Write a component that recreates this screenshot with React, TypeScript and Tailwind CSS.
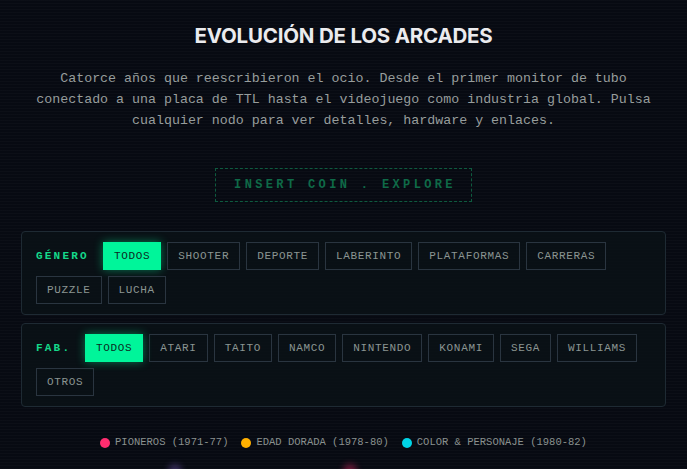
import React from "react";

const genres = ["TODOS", "SHOOTER", "DEPORTE", "LABERINTO", "PLATAFORMAS", "CARRERAS", "PUZZLE", "LUCHA"];
const fabs = ["TODOS", "ATARI", "TAITO", "NAMCO", "NINTENDO", "KONAMI", "SEGA", "WILLIAMS", "OTROS"];

const mono = "font-['Liberation_Mono','DejaVu_Sans_Mono',monospace]";

function Chip({ label, active }: { label: string; active?: boolean }) {
  return active ? (
    <button className={`h-[28px] px-[10px] bg-[#00f59a] text-[#0b2a1f] text-[11px] tracking-[0.06em] ${mono} shadow-[0_0_10px_rgba(0,245,154,0.45)] border border-[#00f59a]`}>
      {label}
    </button>
  ) : (
    <button className={`h-[28px] px-[10px] border border-[#2a3540] text-[#8b9592] text-[11px] tracking-[0.06em] ${mono} bg-transparent`}>
      {label}
    </button>
  );
}

function Panel({ label, items, labelW }: { label: string; items: string[]; labelW: string }) {
  return (
    <div className="mx-[21px] rounded-[4px] border border-[#1e2a33] bg-[#0a1116]/80 pt-[10px] pb-[10px] pl-[14px] pr-[14px]">
      <div className="flex flex-wrap gap-[6px] items-center">
        <span className={`${labelW} text-[#14d98a] text-[11px] font-bold tracking-[0.2em] ${mono}`}>{label}</span>
        {items.map((it, i) => (
          <Chip key={it + i} label={it} active={i === 0} />
        ))}
      </div>
    </div>
  );
}

export default function App() {
  return (
    <div className="relative w-[687px] h-[469px] overflow-hidden bg-[#070a12]">
      <div className="pointer-events-none absolute inset-0 bg-[repeating-linear-gradient(0deg,rgba(255,255,255,0.018)_0px,rgba(255,255,255,0.018)_1px,transparent_1px,transparent_3px)]" />
      <div className="relative flex flex-col">
        <h1 className="mt-[23px] text-center text-[#ebebee] text-[20.5px] font-bold tracking-[-0.01em] leading-[26px] font-['Inter','Liberation_Sans',sans-serif]">
          EVOLUCIÓN DE LOS ARCADES
        </h1>
        <p className={`mt-[19px] text-center text-[#979d9c] text-[13.3px] leading-[21px] ${mono}`}>
          Catorce años que reescribieron el ocio. Desde el primer monitor de tubo
          <br />
          conectado a una placa de TTL hasta el videojuego como industria global. Pulsa
          <br />
          cualquier nodo para ver detalles, hardware y enlaces.
        </p>
        <div className="mt-[37px] flex justify-center">
          <div className={`w-[257px] h-[34px] flex items-center justify-center border border-dashed border-[#0e5b3f] text-[#0f6a48] text-[12px] font-bold tracking-[0.28em] pl-[3px] ${mono}`}>
            INSERT COIN . EXPLORE
          </div>
        </div>
        <div className="mt-[29px]">
          <Panel label="GÉNERO" items={genres} labelW="w-[61px]" />
        </div>
        <div className="mt-[8px]">
          <Panel label="FAB." items={fabs} labelW="w-[43px]" />
        </div>
        <div className={`mt-[28px] flex justify-center items-center gap-[13px] text-[#8a918f] text-[10.5px] ${mono}`}>
          <div className="flex items-center gap-[5px]">
            <span className="w-[10px] h-[10px] rounded-full bg-[#ff2d6f]" />
            <span>PIONEROS (1971-77)</span>
          </div>
          <div className="flex items-center gap-[5px]">
            <span className="w-[10px] h-[10px] rounded-full bg-[#ffb000]" />
            <span>EDAD DORADA (1978-80)</span>
          </div>
          <div className="flex items-center gap-[5px]">
            <span className="w-[10px] h-[10px] rounded-full bg-[#00d4e6]" />
            <span>COLOR &amp; PERSONAJE (1980-82)</span>
          </div>
        </div>
      </div>
      <div className="absolute left-[168px] top-[464px] w-[14px] h-[14px] rounded-full bg-[#7a5cc0]/40 blur-[3px]" />
      <div className="absolute left-[343px] top-[464px] w-[14px] h-[14px] rounded-full bg-[#ff2d6f]/40 blur-[3px]" />
    </div>
  );
}
